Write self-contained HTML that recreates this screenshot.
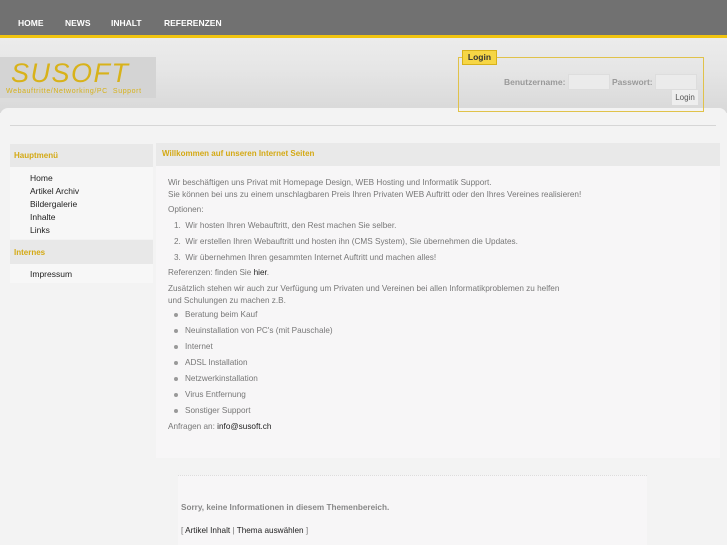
<!DOCTYPE html>
<html><head><meta charset="utf-8"><style>
*{margin:0;padding:0;box-sizing:border-box}
body{width:727px;height:545px;overflow:hidden;background:#f3f3f3;font-family:"Liberation Sans",sans-serif;font-size:8.2px;color:#777;position:relative}
.top{position:absolute;left:0;top:0;width:727px;height:35px;background:#717171}
.top a{position:absolute;top:18px;color:#fff;font-weight:bold;font-size:8.5px;text-decoration:none}
.yl{position:absolute;top:35px;left:0;width:727px;height:3px;background:#f1c40f}
.hd{position:absolute;top:38px;left:0;width:727px;height:75px;background:linear-gradient(#ececec,#e6e6e6 40%,#d8d8d8)}
.logo{position:absolute;left:0;top:57px;width:156px;height:41px;background:#d4d4d4}
.logo .t{position:absolute;left:11px;top:1px;font-family:"Liberation Sans",sans-serif;font-style:italic;font-size:27px;color:#d8b21a;letter-spacing:1.5px}
.logo .s{position:absolute;left:6px;top:31px;font-size:7px;color:#d8b21a;letter-spacing:0.6px}
.main{position:absolute;left:0;top:108px;width:727px;height:437px;background:#f3f3f3;border-radius:8px 8px 0 0}
.hr{position:absolute;left:10px;top:125px;width:706px;height:1px;background:#d6d6d6}
.login{position:absolute;left:458px;top:57px;width:246px;height:55px;border:1px solid #e0c24a}
.lt{position:absolute;left:462px;top:50px;width:35px;height:15px;background:#f6d645;border:1px solid #d8b21a;font-weight:bold;color:#333;font-size:8.5px;text-align:center;line-height:13px}
.lbl{position:absolute;font-weight:bold;color:#999;font-size:8.5px}
.inp{position:absolute;background:#ebebeb;border:1px solid #ddd}
.btn{position:absolute;left:672px;top:90px;width:26px;height:15px;background:#eee;color:#555;font-size:8px;text-align:center;line-height:15px}
.sh{position:absolute;background:#e8e8e8;color:#d4a914;font-weight:bold;font-size:8px;padding-left:4px}
.sb{position:absolute;background:#f7f7f7}
.sb div{position:absolute;left:20px;color:#222;font-size:8.5px}
.ch{position:absolute;left:156px;top:143px;width:564px;height:23px;background:#e9e9e9;color:#d4a914;font-weight:bold;font-size:8px;padding:6px 0 0 6px}
.cb{position:absolute;left:156px;top:166px;width:564px;height:292px;background:#f7f6f7}
.t{position:absolute;white-space:nowrap}
b{color:#222;font-weight:normal}
.bu{position:absolute;left:174px;width:4px;height:4px;border-radius:2px;background:#999}
.box{position:absolute;left:178px;top:475px;width:469px;height:70px;background:#f7f6f7;border-top:1px dotted #ddd}
</style></head><body>
<div class="top"><a style="left:18px">HOME</a><a style="left:65px">NEWS</a><a style="left:111px">INHALT</a><a style="left:164px">REFERENZEN</a></div>
<div class="yl"></div>
<div class="hd"></div>
<div class="logo"><div class="t">SUSOFT</div><div class="s">Webauftritte/Networking/PC&nbsp; Support</div></div>
<div class="main"></div>
<div class="hr"></div>
<div class="login"></div><div class="lt">Login</div>
<div class="lbl" style="left:504px;top:77px">Benutzername:</div>
<div class="inp" style="left:568px;top:74px;width:42px;height:16px"></div>
<div class="lbl" style="left:612px;top:77px">Passwort:</div>
<div class="inp" style="left:655px;top:74px;width:42px;height:16px"></div>
<div class="btn">Login</div>
<div class="sh" style="left:10px;top:144px;width:143px;height:23px;padding-top:7px">Hauptmenü</div>
<div class="sb" style="left:10px;top:167px;width:143px;height:72px">
<div style="top:6px">Home</div><div style="top:19px">Artikel Archiv</div><div style="top:32px">Bildergalerie</div><div style="top:45px">Inhalte</div><div style="top:58px">Links</div></div>
<div class="sh" style="left:10px;top:240px;width:143px;height:24px;padding-top:8px">Internes</div>
<div class="sb" style="left:10px;top:264px;width:143px;height:19px"><div style="top:5px">Impressum</div></div>
<div class="ch">Willkommen auf unseren Internet Seiten</div>
<div class="cb"></div>
<div class="t" style="left:168px;top:178px">Wir beschäftigen uns Privat mit Homepage Design, WEB Hosting und Informatik Support.</div>
<div class="t" style="left:168px;top:190px">Sie können bei uns zu einem unschlagbaren Preis Ihren Privaten WEB Auftritt oder den Ihres Vereines realisieren!</div>
<div class="t" style="left:168px;top:205px">Optionen:</div>
<div class="t" style="left:174px;top:221px">1.&nbsp; Wir hosten Ihren Webauftritt, den Rest machen Sie selber.</div>
<div class="t" style="left:174px;top:237px">2.&nbsp; Wir erstellen Ihren Webauftritt und hosten ihn (CMS System), Sie übernehmen die Updates.</div>
<div class="t" style="left:174px;top:253px">3.&nbsp; Wir übernehmen Ihren gesammten Internet Auftritt und machen alles!</div>
<div class="t" style="left:168px;top:268px">Referenzen: finden Sie <b>hier</b>.</div>
<div class="t" style="left:168px;top:284px">Zusätzlich stehen wir auch zur Verfügung um Privaten und Vereinen bei allen Informatikproblemen zu helfen</div>
<div class="t" style="left:168px;top:296px">und Schulungen zu machen z.B.</div>
<div class="bu" style="top:313px"></div><div class="t" style="left:185px;top:310px">Beratung beim Kauf</div>
<div class="bu" style="top:329px"></div><div class="t" style="left:185px;top:326px">Neuinstallation von PC's (mit Pauschale)</div>
<div class="bu" style="top:345px"></div><div class="t" style="left:185px;top:342px">Internet</div>
<div class="bu" style="top:361px"></div><div class="t" style="left:185px;top:358px">ADSL Installation</div>
<div class="bu" style="top:377px"></div><div class="t" style="left:185px;top:374px">Netzwerkinstallation</div>
<div class="bu" style="top:393px"></div><div class="t" style="left:185px;top:390px">Virus Entfernung</div>
<div class="bu" style="top:409px"></div><div class="t" style="left:185px;top:406px">Sonstiger Support</div>
<div class="t" style="left:168px;top:422px">Anfragen an: <b>info@susoft.ch</b></div>
<div class="box"></div>
<div class="t" style="left:181px;top:503px;font-weight:bold;color:#888">Sorry, keine Informationen in diesem Themenbereich.</div>
<div class="t" style="left:181px;top:526px">[ <b>Artikel Inhalt</b> | <b>Thema auswählen</b> ]</div>
</body></html>
